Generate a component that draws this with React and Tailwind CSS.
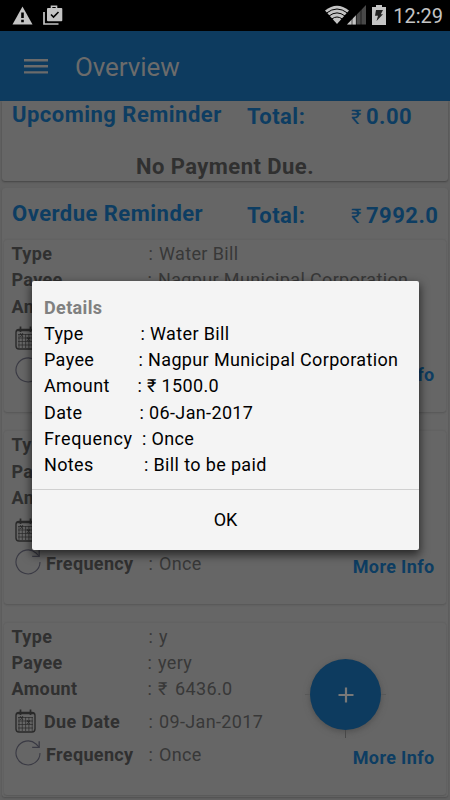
import React from "react";

function CalendarIcon() {
  return (
    <svg width="21" height="24" viewBox="0 0 21 24" fill="none" stroke="#2a2a2a" className="-mt-[2px] shrink-0">
      <rect x="1" y="3.5" width="19" height="19.5" rx="3" strokeWidth="1.4" />
      <path d="M1.5 4.5h18" strokeWidth="1.5" />
      <path d="M5.5 0.5v5.5M15.5 0.5v5.5" strokeWidth="1.7" />
      <path d="M3 8.5h15M3 12h15M3 15.5h15M3 19h15M4 8v14M7.3 8v14M10.6 8v14M13.9 8v14M17.2 8v14" strokeWidth="0.7" />
      <path d="M5 7.5l3 3M8 7.5l-3 3M12 11.5l3 3M15 11.5l-3 3" strokeWidth="1.1" />
    </svg>
  );
}

function RepeatIcon() {
  return (
    <svg width="26" height="26" viewBox="0 0 26 26" fill="none" stroke="#3a3a44" className="-mt-[5px] shrink-0">
      <path d="M25 13A12 12 0 1 1 21 4L24 7" strokeWidth="1.1" />
      <path d="M24.2 1.2v6.2h-7" strokeWidth="1.3" />
    </svg>
  );
}

function Field({ label, value, labelWidth = "w-[137px]", children }) {
  return (
    <div className="flex h-[26.25px] items-center whitespace-nowrap pl-[7.5px]">
      <span className={`${labelWidth} font-bold text-[#303030]`}>{label}</span>
      <span className="w-[10.5px]">:</span>
      {children}
      <span>{value}</span>
    </div>
  );
}

function BillCard({ type, payee, amount, date }) {
  return (
    <section className="mb-[18px] ml-[2px] h-[173.3px] w-[442px] rounded-[3px] border-t border-[#626262] bg-[#666] pt-[1px] text-[18px] leading-[26px] tracking-[0.36px] text-[#383838] shadow-[0_1px_2px_#565656]">
      <Field label="Type" value={type} />
      <Field label="Payee" value={payee} labelWidth="w-[136px]" />
      <Field label="Amount" value={amount} labelWidth="w-[136px]">
        <span className="w-[17px]">₹</span>
      </Field>
      <div className="flex h-[39px] items-center pl-[11px]">
        <CalendarIcon />
        <span className="ml-[8px] w-[104.5px] font-bold text-[#303030]">Due Date</span>
        <span className="w-[10.5px]">:</span>
        <span>{date}</span>
      </div>
      <div className="flex h-[28px] items-center pl-[10.5px]">
        <RepeatIcon />
        <span className="ml-[5.5px] w-[102.5px] font-bold text-[#303030]">Frequency</span>
        <span className="w-[10.5px]">:</span>
        <span>Once</span>
        <span className="ml-auto pr-[11.5px] pt-[5px] font-bold text-[#0d3d62]">More Info</span>
      </div>
    </section>
  );
}

function SectionHead({ title, total }) {
  return (
    <div className="flex h-[28px] items-center whitespace-nowrap pl-[10px] text-[22px] font-bold leading-[30px] tracking-[0.48px] text-[#0d3d62]">
      <span className="w-[235px]">{title}</span>
      <span className="w-[104px] pt-[3px]">Total:</span>
      <span className="flex pt-[3px]">
        <span className="w-[15px] text-[20px] font-normal">₹</span>
        {total}
      </span>
    </div>
  );
}

function DetailRow({ label, width, children }) {
  return (
    <div className="flex h-[26.25px] items-center whitespace-nowrap">
      <span className={width}>{label}</span>
      <span>: {children}</span>
    </div>
  );
}

export default function App() {
  return (
    <div className="relative h-[800px] w-[450px] overflow-hidden bg-[#626262] font-['Roboto','Liberation_Sans',sans-serif]">
      <header className="flex h-[31px] items-center bg-black pl-[12px] pr-[7px] text-[#c4c4c4]">
        <svg width="21" height="19" viewBox="0 0 21 19">
          <path d="M10.5 0.5L20.5 18.5H0.5Z" fill="#c4c4c4" />
          <path d="M9.2 6.5h2.6v5.5H9.2zM9.2 13.8h2.6v2.5H9.2z" fill="#000" />
        </svg>
        <svg className="-mt-[1px] ml-[10px]" width="20" height="20" viewBox="0 0 20 20">
          <path d="M1 7v12h14.5" fill="none" stroke="#c4c4c4" strokeWidth="1.7" />
          <path d="M8.5 3.5V1.3h5v2.2" fill="none" stroke="#c4c4c4" strokeWidth="1.6" />
          <rect x="4" y="3" width="15.3" height="13.3" rx="1" fill="#c4c4c4" />
          <path d="M8 9.5l2.5 2.5 5-5" fill="none" stroke="#000" strokeWidth="1.6" />
        </svg>
        <svg className="-mt-[1px] ml-auto" width="41" height="20" viewBox="0 0 41 20">
          <path d="M0 5.5Q12 -4 24 5.5L12 19Z" fill="#c4c4c4" />
          <path d="M1.5 8Q12 0 22.5 8M4 11Q12 4.8 20 11M6.8 14Q12 10 17.2 14" fill="none" stroke="#000" strokeWidth="1" />
          <path d="M22 19.5L41 0v19.5Z" fill="#484848" />
          <path d="M22 19.5L31 10.3v9.2Z" fill="#c4c4c4" />
          <path d="M27 13v7M31.3 9v11M36 4v16" stroke="#000" strokeWidth=".6" />
        </svg>
        <svg className="-mt-[1px] ml-[6px]" width="14" height="20" viewBox="0 0 14 20" preserveAspectRatio="none">
          <path d="M4 0h6v2h4v18H0V2h4Z" fill="#c4c4c4" />
          <path d="M4 5h7L8.8 9.3H11L4.5 16 6 10.8H3Z" fill="#222" />
        </svg>
        <time className="ml-[7px] pt-[2px] text-[20px] leading-[29px]">12:29</time>
      </header>
      <nav className="flex h-[70px] items-center bg-[#0d3b5f] pl-[24px] text-[#6b6b6b]">
        <svg width="24" height="16" viewBox="0 0 24 16">
          <path d="M0 2.3h24M0 8.3h24M0 14.4h24" stroke="#6b6b6b" strokeWidth="2.4" />
        </svg>
        <h1 className="ml-[27px] pt-[1px] text-[26px] leading-[34px] tracking-[-0.1px]">Overview</h1>
      </nav>
      <main className="pl-[2px]">
        <section className="h-[80px] w-[446px] rounded-b-[3px] bg-[#666] shadow-[0_1px_2px_#444]">
          <SectionHead title="Upcoming Reminder" total="0.00" />
          <p className="pt-[23px] text-center text-[22px] font-bold leading-[30px] tracking-[0.45px] text-[#303030]">No Payment Due.</p>
        </section>
        <section className="mt-[7px] h-[609px] w-[446px] rounded-[3px] bg-[#666] pt-[12px] shadow-[0_1px_2px_#505050]">
          <SectionHead title="Overdue Reminder" total="7992.0" />
          <div className="pt-[11px]">
            <BillCard type="Water Bill" payee="Nagpur Municipal Corporation" amount="1500.0" date="06-Jan-2017" />
            <BillCard type="Water Bill" payee="Nagpur" amount="56.0" date="06-Jan-2017" />
            <BillCard type="y" payee="yery" amount="6436.0" date="09-Jan-2017" />
          </div>
        </section>
      </main>
      <button className="absolute left-[310px] top-[659px] flex h-[71px] w-[71px] items-center justify-center rounded-full bg-[#0d3b5f] shadow-[0_2px_6px_#505050]">
        <svg width="16" height="16" viewBox="0 0 16 16">
          <path d="M8 .5v15M.5 8h15" stroke="#787878" strokeWidth="2.2" />
        </svg>
        <span className="absolute left-[35px] top-[71px] h-[8px] w-px bg-[#484848]" />
        <span className="absolute -left-[5px] top-[35px] h-px w-[5px] bg-[#585858]" />
        <span className="absolute -right-[5px] top-[35px] h-px w-[5px] bg-[#585858]" />
      </button>
      <div role="dialog" className="absolute left-[32px] top-[281px] h-[269px] w-[387px] rounded-[2px] bg-[#f4f4f4] text-[18px] leading-[26px] tracking-[0.36px] text-black shadow-[0_4px_10px_1px_rgba(0,0,0,0.6)]">
        <div className="h-[208px] pl-[12px] pt-[13.5px]">
          <h2 className="h-[26.25px] font-bold text-[#808080]">Details</h2>
          <DetailRow label="Type" width="w-[96.5px]">Water Bill</DetailRow>
          <DetailRow label="Payee" width="w-[94.5px]">Nagpur Municipal Corporation</DetailRow>
          <DetailRow label="Amount" width="w-[93.5px]">₹ 1500.0</DetailRow>
          <DetailRow label="Date" width="w-[95.5px]">06-Jan-2017</DetailRow>
          <DetailRow label="Frequency" width="w-[98px] tracking-[0.65px]">Once</DetailRow>
          <DetailRow label="Notes" width="w-[100px]">Bill to be paid</DetailRow>
        </div>
        <button className="h-[61px] w-full border-t border-[#d0d0d0] text-center tracking-normal">OK</button>
      </div>
    </div>
  );
}
